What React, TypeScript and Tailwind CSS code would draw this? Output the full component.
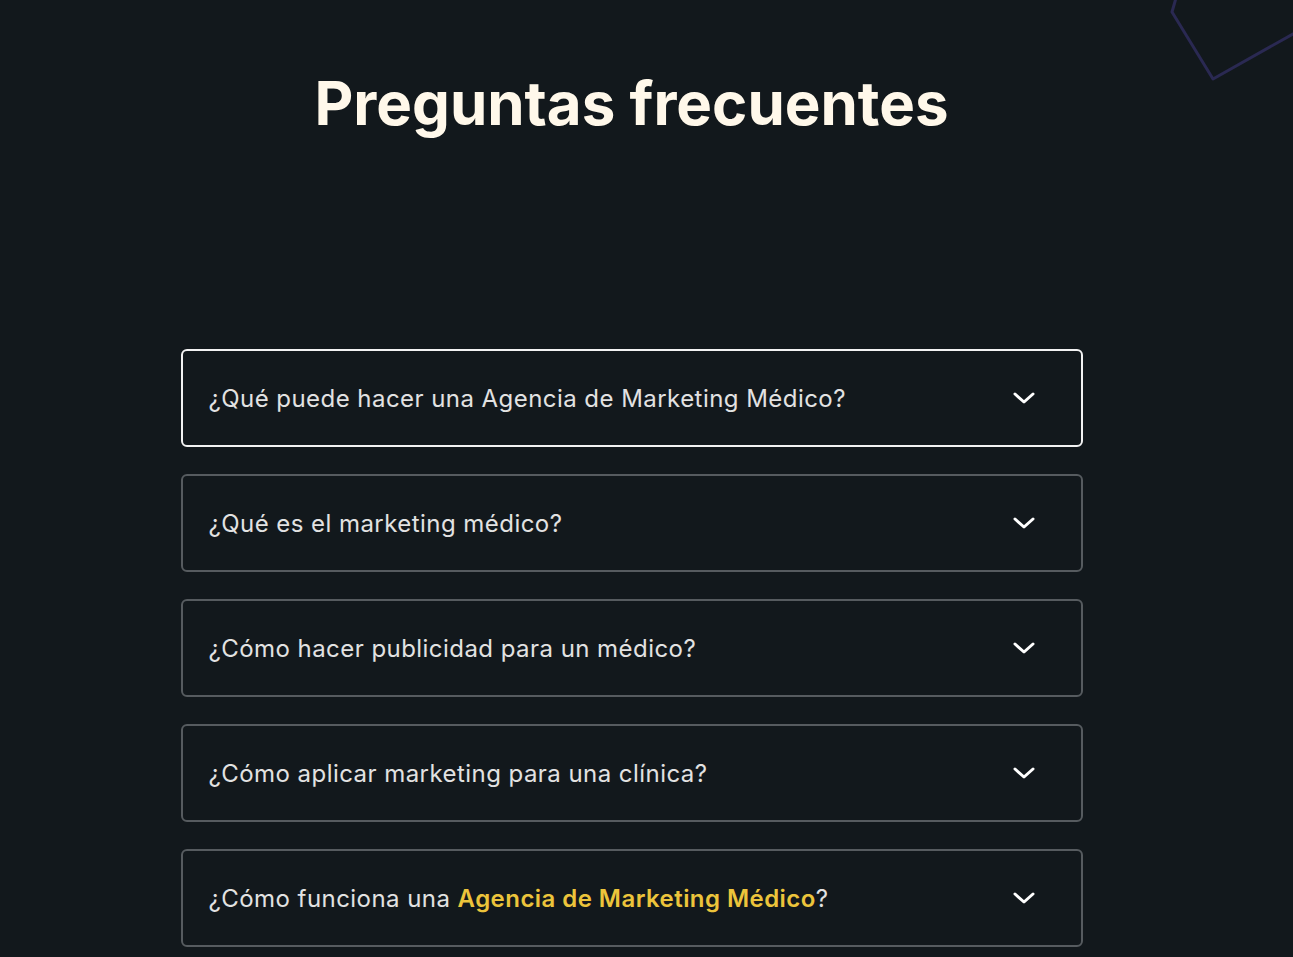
import React from "react";

const items: React.ReactNode[] = [
  "¿Qué puede hacer una Agencia de Marketing Médico?",
  "¿Qué es el marketing médico?",
  "¿Cómo hacer publicidad para un médico?",
  "¿Cómo aplicar marketing para una clínica?",
  <>
    ¿Cómo funciona una{" "}
    <span className="font-semibold text-[#ecc43b]">Agencia de Marketing Médico</span>?
  </>,
];

function Chevron() {
  return (
    <svg width="24" height="14" viewBox="0 0 24 14" fill="none" className="shrink-0">
      <path d="M3 3 L12 11 L21 3" stroke="#ffffff" strokeWidth="3" strokeLinecap="round" strokeLinejoin="round" />
    </svg>
  );
}

export default function App() {
  return (
    <div
      className="relative min-h-[957px] w-full overflow-hidden bg-[#12181c]"
      style={{ fontFamily: "Inter, 'Noto Sans', sans-serif" }}
    >
      <svg className="absolute right-0 top-0" width="130" height="90" viewBox="1163 0 130 90" fill="none">
        <path d="M1176 -2 L1172 12 L1213 79 L1300 30" stroke="#2a2952" strokeWidth="3" strokeLinejoin="round" />
      </svg>
      <div className="pr-[30px]">
        <h1 className="pt-[68px] text-center text-[60px] font-bold leading-[70px] text-[#fff8ea]">
          Preguntas frecuentes
        </h1>
        <div className="mx-auto mt-[211px] flex w-[902px] flex-col gap-[27px]">
          {items.map((q, i) => (
            <div
              key={i}
              className={`flex h-[98px] items-center justify-between rounded-[6px] border-2 pl-[26px] pr-[45px] ${
                i === 0 ? "border-[#f2f2f2]" : "border-[#565b5f]"
              }`}
            >
              <span className="pt-[2px] text-[24px] tracking-[0.45px] text-[#e2e2e2]">{q}</span>
              <Chevron />
            </div>
          ))}
        </div>
      </div>
    </div>
  );
}
